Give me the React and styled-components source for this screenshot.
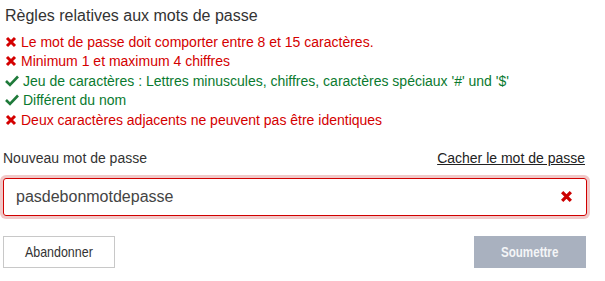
import React from 'react'
import styled, { createGlobalStyle } from 'styled-components'

const Global = createGlobalStyle`
  body { margin: 0; background: #fff; font-family: "Liberation Sans", Arial, sans-serif; }
`

const Page = styled.div`
  width: 584px;
  padding: 6px 0 0 3px;
`

const Title = styled.h2`
  margin: 0 0 6px 2px;
  font-size: 16px;
  font-weight: normal;
  line-height: 20px;
  color: #333;
`

const Rules = styled.ul`
  list-style: none;
  margin: 0;
  padding: 0 0 0 2px;
`

const Rule = styled.li`
  display: flex;
  align-items: center;
  gap: 4px;
  height: 19.5px;
  font-size: 14px;
  color: ${p => (p.ok ? '#0a7a2f' : '#d40000')};
`

const Icon = styled.svg`
  width: 12px;
  height: 12px;
  flex: none;
`

const LabelRow = styled.div`
  display: flex;
  justify-content: space-between;
  align-items: baseline;
  margin-top: 20px;
  font-size: 14px;
  color: #333;
`

const Link = styled.a`
  color: #222;
  text-decoration: underline;
  margin-right: 2px;
`

const Field = styled.div`
  display: flex;
  align-items: center;
  justify-content: space-between;
  height: 36px;
  margin-top: 12px;
  padding: 0 13px 0 12px;
  border: 1px solid #d00000;
  border-radius: 3px;
  box-shadow: 0 0 0 3px rgba(200, 40, 40, 0.25);
  font-size: 16px;
  color: #444;
`

const Buttons = styled.div`
  display: flex;
  justify-content: space-between;
  margin-top: 20px;
  padding-right: 1px;
`

const Button = styled.button`
  width: 112px;
  height: 32px;
  padding: 0;
  font-family: "Liberation Sans", Arial, sans-serif;
  font-size: ${p => (p.primary ? '14px' : '15px')};
  font-weight: ${p => (p.primary ? 'bold' : 'normal')};
  color: ${p => (p.primary ? '#f4f5f7' : '#333')};
  background: ${p => (p.primary ? '#a9b1bf' : '#fff')};
  border: 1px solid ${p => (p.primary ? '#a9b1bf' : '#c8c8c8')};
  border-radius: 0;
`

const Narrow = styled.span`
  display: inline-block;
  transform: scaleX(0.83);
`

const Cross = ({ size = 12, color = '#d40000' }) => (
  <Icon viewBox="0 0 12 12" style={{ width: size, height: size }}>
    <path d="M2 2 L10 10 M10 2 L2 10" stroke={color} strokeWidth="3" strokeLinecap="butt" />
  </Icon>
)

const Check = () => (
  <Icon viewBox="0 0 14 12" style={{ width: 14, height: 12 }}>
    <path d="M1 6 L5 10 L13 1.5" stroke="#1f7a3a" strokeWidth="2.6" fill="none" />
  </Icon>
)

const rules = [
  { ok: false, text: 'Le mot de passe doit comporter entre 8 et 15 caractères.' },
  { ok: false, text: 'Minimum 1 et maximum 4 chiffres' },
  { ok: true, text: "Jeu de caractères : Lettres minuscules, chiffres, caractères spéciaux '#' und '$'" },
  { ok: true, text: 'Différent du nom' },
  { ok: false, text: 'Deux caractères adjacents ne peuvent pas être identiques' },
]

export default function App() {
  return (
    <Page>
      <Global />
      <Title>Règles relatives aux mots de passe</Title>
      <Rules>
        {rules.map(r => (
          <Rule key={r.text} ok={r.ok}>
            {r.ok ? <Check /> : <Cross />}
            {r.text}
          </Rule>
        ))}
      </Rules>
      <LabelRow>
        <span>Nouveau mot de passe</span>
        <Link>Cacher le mot de passe</Link>
      </LabelRow>
      <Field>
        <span>pasdebonmotdepasse</span>
        <Cross size={13} color="#cc0000" />
      </Field>
      <Buttons>
        <Button><Narrow>Abandonner</Narrow></Button>
        <Button primary><Narrow>Soumettre</Narrow></Button>
      </Buttons>
    </Page>
  )
}
